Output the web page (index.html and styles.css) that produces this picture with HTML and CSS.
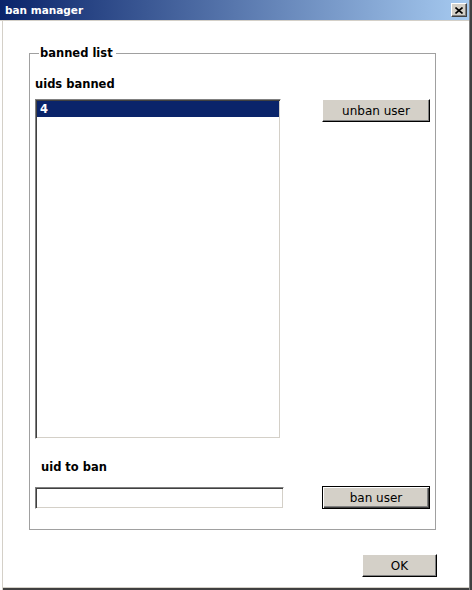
FILE: index.html
```html
<!DOCTYPE html>
<html lang="en">
<head>
  <meta charset="UTF-8" />
  <title>ban manager</title>
  <link rel="stylesheet" href="styles.css">
</head>
<body>

  <div class="window">
    <div class="titlebar">
      <span class="title">ban manager</span>
      <button type="button" class="close-btn" aria-label="Close">
        <svg width="8" height="7" viewBox="0 0 8 7">
          <path d="M0.5 0.5 L7.5 6.5 M7.5 0.5 L0.5 6.5" stroke="#000" stroke-width="1.6" fill="none"/>
        </svg>
      </button>
    </div>

    <div class="content">
      <fieldset class="group">
        <legend>banned list</legend>
        <div class="group-grid">
          <div class="field-label label-list">uids banned</div>
          <div class="listbox">
            <div class="list-item selected">4</div>
          </div>
          <button type="button" class="btn btn-unban">unban user</button>

          <div class="field-label label-uid">uid to ban</div>
          <input type="text" class="textbox" id="uid" />
          <button type="button" class="btn btn-default btn-ban">ban user</button>
        </div>
      </fieldset>

      <div class="footer">
        <button type="button" class="btn btn-ok">OK</button>
      </div>
    </div>
  </div>

</body>
</html>
```

FILE: styles.css
```css
html, body {
  margin: 0;
  padding: 0;
  background: #fff;
  font-family: "DejaVu Sans", Verdana, sans-serif;
}

.window {
  width: 472px;
  height: 590px;
  box-sizing: border-box;
  background: #fff;
  box-shadow: inset 2px 0 0 #fff, inset 3px 0 0 #d4d0c8,
              inset -2px 0 0 #404040, inset -3px 0 0 #808080,
              inset 0 -2px 0 #404040, inset 0 -3px 0 #d4d0c8;
}

.titlebar {
  height: 20px;
  margin-right: 3px;
  padding: 0 2px 0 5px;
  display: flex;
  align-items: center;
  justify-content: space-between;
  background: linear-gradient(to right, #0a246a, #a6caf0);
  border-bottom: 1px solid #d4d0c8;
}

.title {
  color: #fff;
  font-weight: bold;
  font-size: 10.5px;
}

.close-btn {
  width: 16px;
  height: 14px;
  padding: 0;
  margin: 0;
  display: flex;
  align-items: center;
  justify-content: center;
  background: #d4d0c8;
  border: 1px solid;
  border-color: #fff #404040 #404040 #fff;
  box-shadow: inset -1px -1px 0 #808080;
}

.content {
  padding: 25px 0 0 29px;
}

.group {
  width: 407px;
  box-sizing: border-box;
  margin: 0;
  min-width: 0;
  padding: 17px 5px 20px 5px;
  border: 1px solid #a0a0a0;
}

.group legend {
  margin-left: 4px;
  padding: 0 3px 0 1px;
  font-size: 11.5px;
  font-weight: bold;
  line-height: 14px;
  color: #000;
}

.group-grid {
  display: grid;
  grid-template-columns: 246px 108px;
  column-gap: 41px;
  grid-template-areas:
    "lbl1 ."
    "list unban"
    "lbl2 ."
    "input ban";
  align-items: start;
}

.field-label {
  font-size: 11.5px;
  font-weight: bold;
  line-height: 15px;
  color: #000;
}

.label-list {
  grid-area: lbl1;
  margin-bottom: 7px;
}

.label-uid {
  grid-area: lbl2;
  margin: 21px 0 11px 6px;
}

.listbox {
  grid-area: list;
  height: 340px;
  box-sizing: border-box;
  padding: 1px;
  border: 1px solid;
  border-color: #808080 #fff #fff #808080;
  box-shadow: inset 1px 1px 0 #404040, inset -1px -1px 0 #d4d0c8;
  background: #fff;
}

.list-item {
  height: 16px;
  line-height: 16px;
  padding-left: 3px;
  font-size: 11.5px;
  font-weight: bold;
}

.list-item.selected {
  background: #0a246a;
  color: #fff;
}

.textbox {
  grid-area: input;
  align-self: end;
  width: 249px;
  height: 22px;
  box-sizing: border-box;
  margin: 0;
  padding: 2px 4px;
  border: 1px solid;
  border-color: #808080 #fff #fff #808080;
  box-shadow: inset 1px 1px 0 #404040, inset -1px -1px 0 #d4d0c8;
  background: #fff;
  outline: none;
  font-family: inherit;
  font-size: 12px;
}

.btn {
  height: 23px;
  box-sizing: border-box;
  margin: 0;
  padding: 0;
  background: #d4d0c8;
  color: #000;
  font-family: inherit;
  font-size: 12px;
  border: 1px solid;
  border-color: #fff #000 #000 #fff;
  box-shadow: inset -1px -1px 0 #808080;
  cursor: pointer;
}

.btn-default {
  border-color: #000;
  box-shadow: inset 1px 1px 0 #fff, inset -1px -1px 0 #404040, inset -2px -2px 0 #808080;
}

.btn-unban {
  grid-area: unban;
  width: 108px;
}

.btn-ban {
  grid-area: ban;
  width: 108px;
  align-self: end;
}

.footer {
  display: flex;
  justify-content: flex-end;
  margin-top: 24px;
  padding-right: 35px;
}

.btn-ok {
  width: 75px;
}
```
